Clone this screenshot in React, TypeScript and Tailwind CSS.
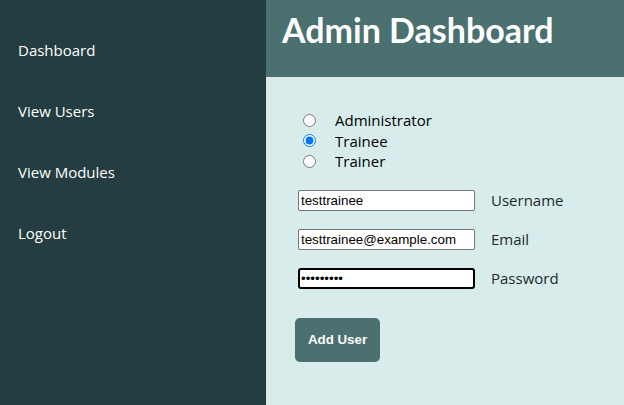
import React from 'react';

const navItems = ['Dashboard', 'View Users', 'View Modules', 'Logout'];

const fields = [
  { label: 'Username', type: 'text', value: 'testtrainee' },
  { label: 'Email', type: 'email', value: 'testtrainee@example.com' },
  { label: 'Password', type: 'password', value: 'password1' },
];

const App = () => {
  return (
    <div className="flex h-[405px] w-full font-['Open_Sans',sans-serif]">
      <aside className="w-[266px] shrink-0 bg-[#243d40]">
        <nav className="flex flex-col gap-[37px] pt-[38px] pl-[18px]">
          {navItems.map((item) => (
            <a key={item} href="#" className="text-[15px] leading-6 text-white">
              {item}
            </a>
          ))}
        </nav>
      </aside>

      <main className="flex flex-1 flex-col bg-[#d8ecec]">
        <header className="h-[77px] bg-[#4a7070] pl-4 pt-[10px]">
          <h1 className="font-['Lato',sans-serif] text-[34px] font-bold leading-10 text-white">
            Admin Dashboard
          </h1>
        </header>

        <form className="flex flex-col pl-[29px] pt-[33px]">
          <div className="ml-[3px] flex flex-col text-[15px] leading-[20.5px] text-black">
            {['Administrator', 'Trainee', 'Trainer'].map((role) => (
              <label key={role} className="flex items-center">
                <input
                  type="radio"
                  name="role"
                  defaultChecked={role === 'Trainee'}
                  className="ml-[5px] h-[13px] w-[13px]"
                />
                <span className="ml-[19px]">{role}</span>
              </label>
            ))}
          </div>

          <div className="ml-[3px] mt-[18px] flex flex-col gap-[18px]">
            {fields.map((f) => (
              <div key={f.label} className="flex h-[21px] items-center">
                <input
                  type={f.type}
                  defaultValue={f.value}
                  readOnly
                  className={
                    f.type === 'password'
                      ? "h-[21px] w-[177px] rounded-[3px] border-2 border-black bg-white px-[1px] font-['Liberation_Sans',sans-serif] text-[13.33px] text-black outline-none"
                      : "h-[21px] w-[177px] rounded-[2px] border border-[#767676] bg-white px-[2px] font-['Liberation_Sans',sans-serif] text-[13.33px] text-black outline-none"
                  }
                />
                <span className="ml-[16px] text-[15px] leading-[21px] text-[#1f2a2a]">{f.label}</span>
              </div>
            ))}
          </div>

          <button
            type="button"
            className="mt-[29px] h-[44px] w-[85px] rounded-[5px] bg-[#4a7070] font-['Liberation_Sans',sans-serif] text-[13.33px] font-bold text-white"
          >
            Add User
          </button>
        </form>
      </main>
    </div>
  );
};

export default App;
